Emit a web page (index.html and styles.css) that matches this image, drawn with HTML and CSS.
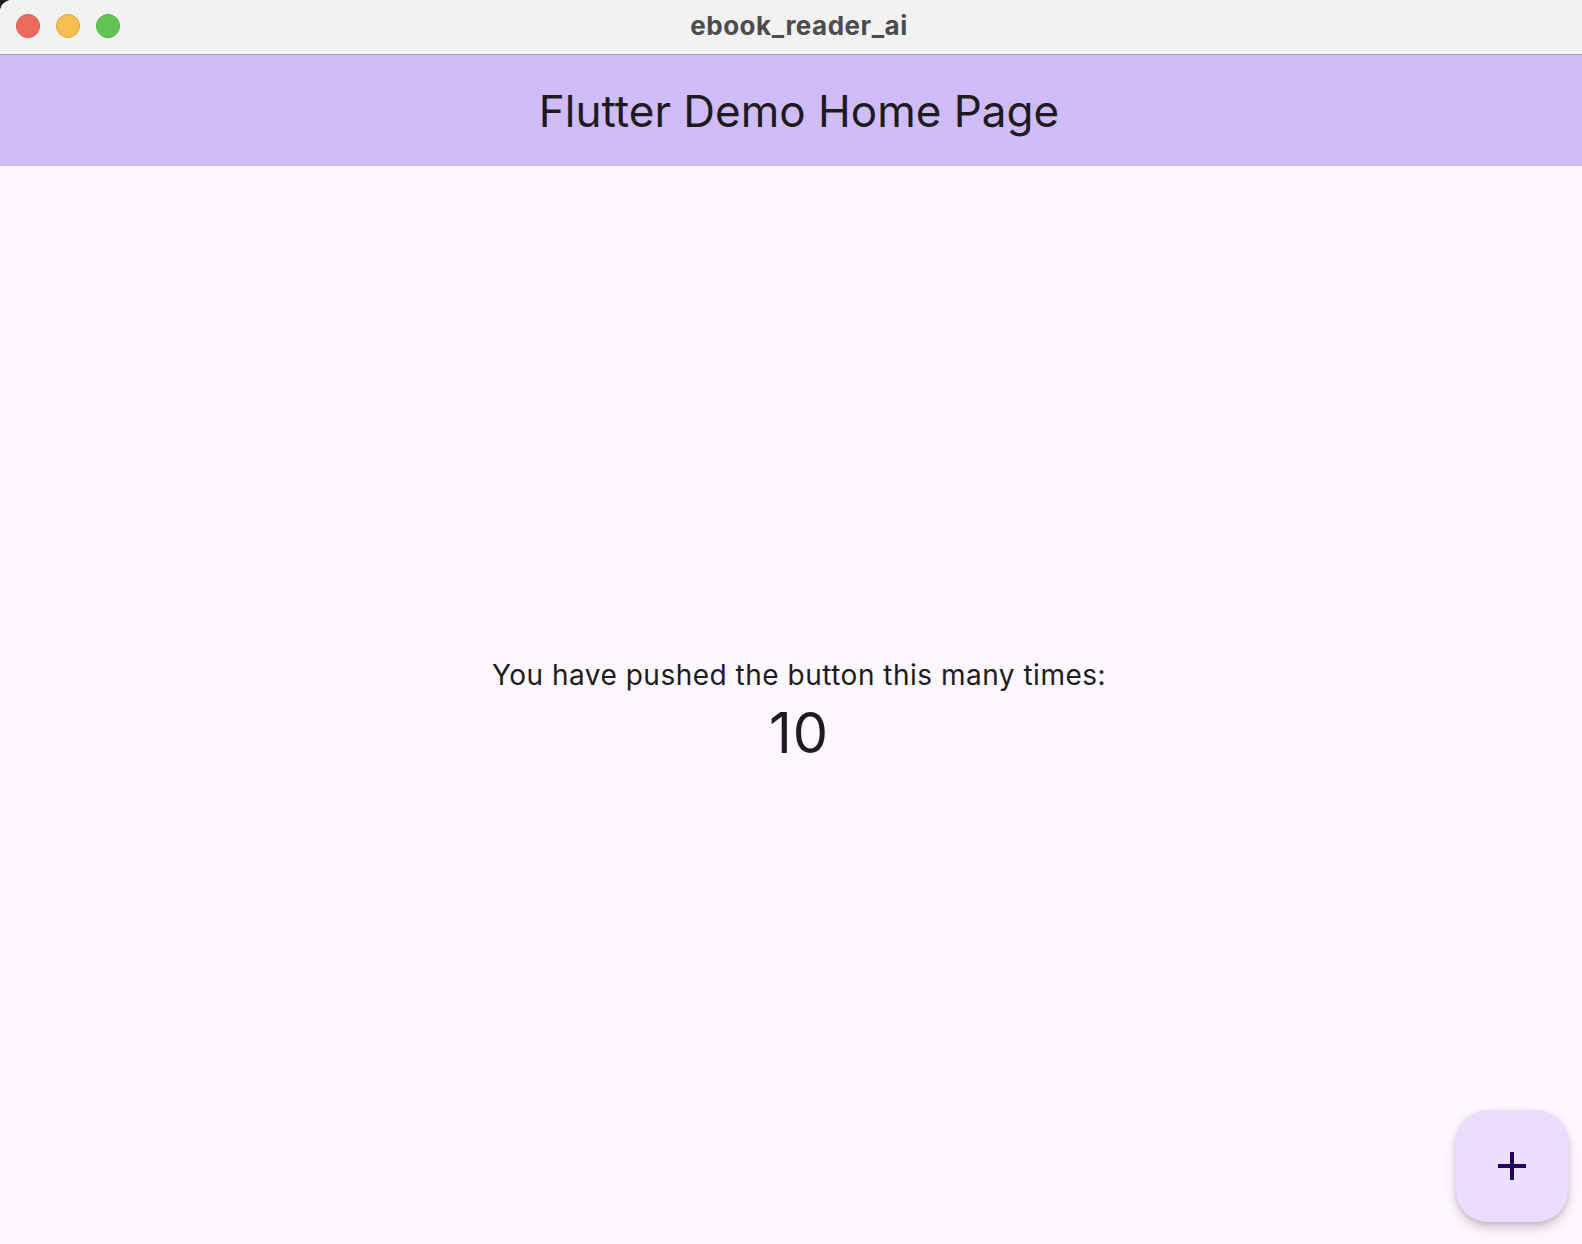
FILE: index.html
```html
<!DOCTYPE html>
<html>
<head>
<meta charset="utf-8">
<title>ebook_reader_ai</title>
<link rel="stylesheet" href="styles.css">
</head>
<body>
<div class="window">
  <div class="titlebar">
    <div class="lights">
      <span class="light red"></span>
      <span class="light yellow"></span>
      <span class="light green"></span>
    </div>
    <div class="wintitle">ebook_reader_ai</div>
  </div>
  <div class="appbar">
    <h1 class="apptitle">Flutter Demo Home Page</h1>
  </div>
  <div class="content">
    <div class="counter">
      <p class="label">You have pushed the button this many times:</p>
      <p class="count">10</p>
    </div>
    <button class="fab" aria-label="Increment">
      <svg width="48" height="48" viewBox="0 0 24 24"><path d="M19 13h-6v6h-2v-6H5v-2h6V5h2v6h6v2z" fill="#21005d"/></svg>
    </button>
  </div>
</div>
</body>
</html>
```
FILE: styles.css
```css
html, body {
  margin: 0;
  padding: 0;
  background: #1c1c1e;
  overflow: hidden;
  width: 1582px;
  height: 1244px;
}
.window {
  width: 1598px;
  height: 1254px;
  border-radius: 12px 12px 0 0;
  overflow: hidden;
  display: flex;
  flex-direction: column;
  background: #fdf7ff;
  font-family: Inter, "Noto Sans", sans-serif;
}
.titlebar {
  height: 54px;
  flex: none;
  background: #f1f1f0;
  border-bottom: 1px solid #a99bc9;
  display: flex;
  align-items: center;
  justify-content: center;
  position: relative;
}
.lights {
  position: absolute;
  left: 16px;
  top: 14px;
  display: flex;
  gap: 16px;
}
.light {
  width: 24px;
  height: 24px;
  border-radius: 50%;
  box-sizing: border-box;
}
.red { background: #ed6a5e; border: 1px solid #d9574c; }
.yellow { background: #f5bf4f; border: 1px solid #dca43b; }
.green { background: #61c454; border: 1px solid #4fae43; }
.wintitle {
  font-size: 26px;
  font-weight: 700;
  color: #4c4c4c;
  letter-spacing: 0.5px;
  margin-top: -4px;
}
.appbar {
  height: 111px;
  flex: none;
  background: #d0bcf8;
  display: flex;
  align-items: center;
  justify-content: center;
}
.apptitle {
  margin: 0;
  font-size: 44px;
  font-weight: 400;
  color: #1d1b20;
  line-height: 56px;
}
.content {
  flex: 1;
  position: relative;
  display: flex;
  align-items: center;
  justify-content: center;
  padding-top: 4px;
}
.counter {
  display: flex;
  flex-direction: column;
  align-items: center;
  color: #1d1b20;
}
.label {
  margin: 0;
  font-size: 28px;
  line-height: 40px;
  letter-spacing: 0.5px;
}
.count {
  margin: 0;
  font-size: 56px;
  line-height: 72px;
  margin-top: 2px;
  letter-spacing: 1px;
}
.fab {
  position: absolute;
  right: 30px;
  bottom: 32px;
  width: 112px;
  height: 112px;
  border: none;
  border-radius: 32px;
  background: #eaddff;
  display: flex;
  align-items: center;
  justify-content: center;
  padding: 0;
  box-shadow: 0 6px 12px rgba(0,0,0,0.18), 0 2px 4px rgba(0,0,0,0.1);
}
```
